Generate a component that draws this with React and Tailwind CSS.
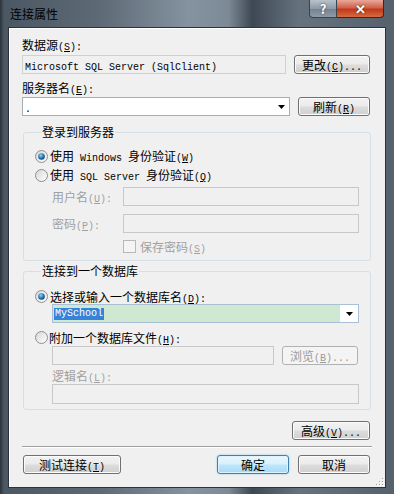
import React from "react";

// splits a label into CJK runs and SimSun-like half-width ASCII runs; "&X" underlines X
function Label({ text }) {
  const parts = text.split(/([\x20-\x7e]+)/).filter(Boolean);
  return parts.map((p, i) => {
    if (!/[\x20-\x7e]/.test(p)) return <span key={i}>{p}</span>;
    const m = p.split("&");
    return (
      <span key={i} className="font-['Liberation_Mono'] text-[10px]">
        {m[0]}
        {m[1] !== undefined && (
          <>
            <span className="underline">{m[1][0]}</span>
            {m[1].slice(1)}
          </>
        )}
      </span>
    );
  });
}

function Text({ text, className = "" }) {
  return (
    <div className={`h-[12px] whitespace-nowrap leading-[12px] ${className}`}>
      <Label text={text} />
    </div>
  );
}

function Button({ text, className = "", variant = "normal" }) {
  const styles = {
    normal:
      "border-[#707070] bg-[linear-gradient(180deg,#f2f2f2_0%,#ebebeb_48%,#dddddd_52%,#cfcfcf_100%)] shadow-[inset_0_0_0_1px_#fbfbfb] text-black",
    primary:
      "border-[#3c7fb1] bg-[linear-gradient(180deg,#eaf6fd_0%,#d9f0fc_48%,#bee6fd_52%,#a7d9f5_100%)] shadow-[inset_0_0_0_1px_#e0f3fd,0_0_2px_#7fc4ee] text-black",
    disabled: "border-[#adb2b5] bg-[#f4f4f4] text-[#9a9a9a]",
  };
  return (
    <div
      className={`flex h-[19px] items-center justify-center rounded-[3px] border ${styles[variant]} ${className}`}
    >
      <Text text={text} />
    </div>
  );
}

function Radio({ checked }) {
  return (
    <svg width="13" height="13" viewBox="0 0 13 13" className="shrink-0">
      <defs>
        <linearGradient id="rbg" x1="0" y1="0" x2="1" y2="1">
          <stop offset="0" stopColor="#d6d6d6" />
          <stop offset="1" stopColor="#ffffff" />
        </linearGradient>
        <radialGradient id="rdot" cx="0.4" cy="0.35" r="0.7">
          <stop offset="0" stopColor="#9fd4f3" />
          <stop offset="0.5" stopColor="#2d82c4" />
          <stop offset="1" stopColor="#103c6a" />
        </radialGradient>
      </defs>
      <circle cx="6.5" cy="6.5" r="6" fill="url(#rbg)" stroke="#8e8f8f" />
      {checked && <circle cx="6.5" cy="6.5" r="3.3" fill="url(#rdot)" />}
    </svg>
  );
}

function Arrow() {
  return (
    <svg width="7" height="4" viewBox="0 0 7 4" className="shrink-0">
      <polygon points="0,0 7,0 3.5,4" fill="#000" />
    </svg>
  );
}

function Field({ className = "", disabled }) {
  return (
    <div
      className={`h-[19px] shrink-0 border ${
        disabled ? "border-[#c8c8c8] bg-[#f0f0f0]" : "border-[#abadb3] bg-white"
      } ${className}`}
    />
  );
}

function Group({ title, children, className = "" }) {
  return (
    <fieldset
      className={`ml-[1px] w-[348px] rounded-[3px] border border-[#d5dfe5] pl-[11px] ${className}`}
    >
      <legend className="ml-[6px] h-[12px] px-[1px] leading-[12px]">{title}</legend>
      {children}
    </fieldset>
  );
}

export default function App() {
  return (
    <div className="flex h-[494px] w-[394px] flex-col bg-[linear-gradient(90deg,#2b333b_0px,#4b5762_4px,#5d6975_25%,#8593a0_48%,#7d8a96_58%,#3d4853_64%,#66737f_76%,#55616d_100%)] font-['Noto_Sans_CJK_SC',sans-serif] text-[12px] text-black">
      {/* title bar */}
      <div className="flex h-[27px] shrink-0 items-start justify-between">
        <div className="pl-[10px] pt-[7px] text-[12px] leading-[14px] text-black">连接属性</div>
        <div className="mr-[10px] flex">
          <div className="flex h-[18px] w-[28px] items-center justify-center rounded-bl-[4px] border border-t-0 border-[#3a444e] bg-[linear-gradient(180deg,#b8c2cb_0%,#8e9aa6_50%,#75828e_52%,#8d9aa7_100%)] text-[13px] font-bold leading-none text-white [text-shadow:0_0_2px_#333]">
            ?
          </div>
          <div className="flex h-[18px] w-[47px] items-center justify-center rounded-br-[4px] border border-l-0 border-t-0 border-[#4a2018] bg-[linear-gradient(180deg,#e9a99a_0%,#d0624a_45%,#c0391b_55%,#d86a3e_100%)] text-[13px] font-bold leading-none text-white [text-shadow:0_0_2px_#411]">
            ✕
          </div>
        </div>
      </div>

      {/* client area */}
      <div className="relative mx-[8px] flex h-[461px] flex-col border border-[#2a333c] bg-[#f0f0f0] pl-[13px] pr-[15px] shadow-[inset_1px_1px_0_#ffffff]">
        <Text text="数据源(&S):" className="mt-[11px]" />
        <div className="mt-[4px] flex items-center justify-between">
          <div className="flex h-[19px] w-[264px] items-center border border-[#d0d0d0] bg-[#f0f0f0] pl-[2px]">
            <Text text="Microsoft SQL Server (SqlClient)" />
          </div>
          <Button text="更改(&C)..." className="w-[76px]" />
        </div>

        <Text text="服务器名(&E):" className="mt-[8px]" />
        <div className="mt-[3px] flex items-center justify-between">
          <div className="flex h-[19px] w-[268px] items-center justify-between border border-[#abadb3] bg-white pl-[2px] pr-[4px]">
            <Text text="." />
            <Arrow />
          </div>
          <Button text="刷新(&R)" className="w-[72px]" />
        </div>

        <Group title="登录到服务器" className="mt-[10px] pb-[7px]">
          <div className="mt-[11px] flex h-[14px] items-center gap-[2px]">
            <Radio checked />
            <Text text="使用 Windows 身份验证(&W)" />
          </div>
          <div className="mt-[5px] flex h-[14px] items-center gap-[2px]">
            <Radio />
            <Text text="使用 SQL Server 身份验证(&Q)" />
          </div>
          <div className="ml-[17px] mt-[5px] flex items-center text-[#a0a0a0]">
            <Text text="用户名(&U):" className="w-[71px]" />
            <Field disabled className="w-[236px]" />
          </div>
          <div className="ml-[17px] mt-[8px] flex items-center text-[#a0a0a0]">
            <Text text="密码(&P):" className="w-[71px]" />
            <Field disabled className="w-[236px]" />
          </div>
          <div className="ml-[88px] mt-[7px] flex h-[13px] items-center gap-[4px] text-[#a0a0a0]">
            <div className="h-[13px] w-[13px] border border-[#b8b8b8] bg-[#f4f4f4]" />
            <Text text="保存密码(&S)" />
          </div>
        </Group>

        <Group title="连接到一个数据库" className="mt-[4px] pb-[5px]">
          <div className="mt-[13px] flex h-[13px] items-center gap-[2px]">
            <Radio checked />
            <Text text="选择或输入一个数据库名(&D):" />
          </div>
          <div className="ml-[17px] mt-[1px] flex h-[19px] w-[307px] items-center border border-[#a9bfd6] bg-white">
            <div className="flex h-[17px] w-[287px] items-center bg-[#cfe8d2] pl-[1px]">
              <span className="h-[12px] bg-[#3584d9] px-[1px] font-['Liberation_Mono'] text-[10px] leading-[12px] text-white">
                MySchool
              </span>
            </div>
            <div className="flex flex-1 items-center justify-center">
              <Arrow />
            </div>
          </div>
          <div className="mt-[8px] flex h-[13px] items-center gap-[1px]">
            <Radio />
            <Text text="附加一个数据库文件(&H):" />
          </div>
          <div className="ml-[17px] mt-[2px] flex items-center gap-[8px]">
            <Field disabled className="w-[222px]" />
            <Button text="浏览(&B)..." variant="disabled" className="h-[18px] w-[76px]" />
          </div>
          <Text text="逻辑名(&L):" className="ml-[17px] mt-[5px] text-[#a0a0a0]" />
          <Field disabled className="ml-[17px] mt-[2px] h-[20px] w-[307px]" />
        </Group>

        <div className="mt-[11px] flex justify-end">
          <Button text="高级(&V)..." className="w-[78px]" />
        </div>

        <div className="mt-[6px] h-[2px] w-[350px] border-b border-t border-b-white border-t-[#a0a0a0]" />

        <div className="mt-[7px] flex items-center">
          <Button text="测试连接(&T)" className="ml-[1px] w-[98px]" />
          <Button text="确定" variant="primary" className="ml-[96px] w-[72px]" />
          <Button text="取消" className="ml-[9px] w-[72px]" />
        </div>

        {/* size grip */}
        <svg width="9" height="9" viewBox="0 0 9 9" className="absolute bottom-[1px] right-[1px]">
          {[
            [7, 1],
            [4, 4],
            [7, 4],
            [1, 7],
            [4, 7],
            [7, 7],
          ].map(([x, y]) => (
            <g key={`${x}-${y}`}>
              <rect x={x + 1} y={y + 1} width="1" height="1" fill="#ffffff" />
              <rect x={x} y={y} width="1" height="1" fill="#a0a0a0" />
            </g>
          ))}
        </svg>
      </div>
    </div>
  );
}
